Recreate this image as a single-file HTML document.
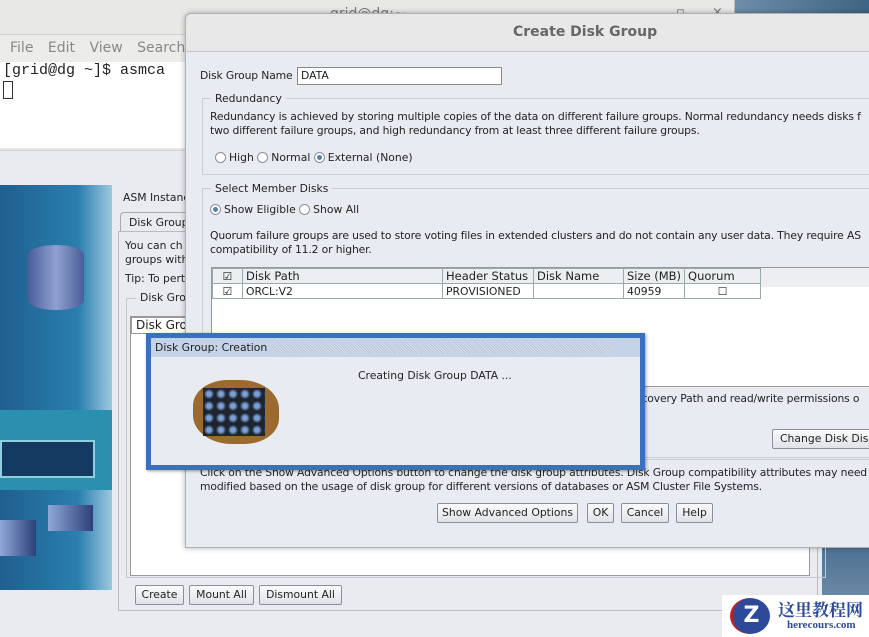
<!DOCTYPE html>
<html><head><meta charset="utf-8"><style>
*{margin:0;padding:0;box-sizing:border-box}
body{width:869px;height:637px;overflow:hidden;position:relative;background:#e9ebf0;font-family:"DejaVu Sans","Liberation Sans",sans-serif;font-size:10.8px;color:#222}
.a{position:absolute}
.btn{position:absolute;border:1px solid #8a8f99;border-radius:2px;background:linear-gradient(#fbfbfc,#dfe2e8);font-size:10.8px;text-align:center;line-height:18px;height:20px;color:#222}
.rad{display:inline-block;width:11px;height:11px;border:1px solid #8a8f99;border-radius:50%;background:#fff;vertical-align:-2px;margin-right:3px;position:relative}
.rad.on:after{content:"";position:absolute;left:2px;top:2px;width:5px;height:5px;border-radius:50%;background:#5a7fb5}
.grp{position:absolute;border:1px solid #c8ccd4;border-right:none}
.lg{position:absolute;background:#e8ebf2;padding:0 4px;top:-7px;left:8px}
td{border:1px solid #9aa;padding:0 3px;height:15px;font-size:10.8px;white-space:nowrap}
.t{letter-spacing:-0.15px}
</style></head><body>
<div class="a" style="left:735px;top:0;width:134px;height:20px;background:linear-gradient(90deg,#6e8da9,#3e6584)"></div>
<div class="a" style="left:0;top:0;width:735px;height:150px;background:#e8e8e7;border-right:1px solid #bbb"></div>
<div class="a" style="left:330px;top:6px;color:#777;font-size:14px">grid@dg:~</div>
<div class="a" style="left:676px;top:5px;color:#777;font-size:13px">▫</div>
<div class="a" style="left:712px;top:5px;color:#777;font-size:13px">×</div>
<div class="a" style="left:0;top:34px;width:735px;height:28px;border-top:1px solid #d4d4d4;background:#ececeb"></div>
<div class="a" style="left:10px;top:40px;font-size:14px;color:#888;word-spacing:10px">File Edit View Search</div>
<div class="a" style="left:0;top:62px;width:735px;height:86px;background:#fff"></div>
<div class="a" style="left:3px;top:62px;font-family:'Liberation Mono',monospace;font-size:15px;color:#222">[grid@dg ~]$ asmca</div>
<div class="a" style="left:3px;top:81px;width:10px;height:18px;border:1px solid #333"></div>
<div class="a" style="left:0;top:150px;width:822px;height:487px;background:#e9ebf0;border-top:1px solid #d0d0d0"></div>
<div class="a" style="left:822px;top:540px;width:47px;height:60px;background:linear-gradient(#4a6e90,#6d8aa6)"></div>
<div class="a" style="left:0;top:185px;width:112px;height:405px;background:linear-gradient(90deg,#1f5f8f 0%,#2a7fae 70%,#9dc8e0 100%)"></div>
<div class="a" style="left:0;top:410px;width:112px;height:80px;background:#2b8fb0"></div>
<div class="a" style="left:0;top:440px;width:95px;height:38px;background:#153a62;border:2px solid #8fd0e0"></div>
<div class="a" style="left:28px;top:245px;width:56px;height:65px;border-radius:28px/10px;background:linear-gradient(90deg,#4a5e9a,#8fa0d0,#4a5e9a)"></div>
<div class="a" style="left:0;top:520px;width:36px;height:36px;background:linear-gradient(90deg,#8fa8d8,#2c3f7a)"></div>
<div class="a" style="left:48px;top:505px;width:45px;height:26px;background:linear-gradient(90deg,#8fa8d8,#2c3f7a)"></div>
<div class="a" style="left:123px;top:191px">ASM Instanc</div>
<div class="a" style="left:120px;top:212px;width:80px;height:20px;border:1px solid #aaa;border-bottom:none;border-radius:4px 4px 0 0;padding:3px 8px">Disk Group</div>
<div class="a" style="left:118px;top:231px;width:700px;height:380px;border:1px solid #bbb"></div>
<div class="a" style="left:125px;top:239px;line-height:14px">You can ch<br>groups with</div>
<div class="a" style="left:125px;top:272px">Tip: To pert</div>
<div class="a" style="left:126px;top:298px;width:700px;height:280px;border:1px solid #c4c8d0"></div>
<div class="a" style="left:136px;top:291px;background:#e9ebf0;padding:0 4px">Disk Gro</div>
<div class="a" style="left:130px;top:316px;width:680px;height:260px;background:#fff;border:1px solid #999"></div>
<div class="a" style="left:131px;top:317px;width:68px;height:17px;border:1px solid #999;padding-left:4px;font-size:12px">Disk Gro</div>
<div class="btn" style="left:135px;top:585px;width:49px">Create</div>
<div class="btn" style="left:189px;top:585px;width:65px">Mount All</div>
<div class="btn" style="left:259px;top:585px;width:83px">Dismount All</div>
<div class="a" style="left:185px;top:13px;width:690px;height:535px;background:#e8ebf2;border:1px solid #b0b0b0;border-radius:6px 0 0 0;box-shadow:0 0 6px rgba(0,0,0,.3)"></div>
<div class="a" style="left:186px;top:14px;width:683px;height:38px;background:#e8e8e8;border-bottom:1px solid #c8c8c8;border-radius:6px 0 0 0"></div>
<div class="a" style="left:513px;top:24px;font-size:14px;font-weight:bold;color:#666">Create Disk Group</div>
<div class="a t" style="left:200px;top:69px">Disk Group Name</div>
<div class="a" style="left:297px;top:67px;width:205px;height:18px;background:#fff;border:1px solid #888;padding-left:3px;line-height:16px">DATA</div>
<div class="grp" style="left:202px;top:98px;width:680px;height:77px"><span class="lg">Redundancy</span></div>
<div class="a t" style="left:210px;top:110px;line-height:14px;white-space:nowrap">Redundancy is achieved by storing multiple copies of the data on different failure groups. Normal redundancy needs disks f<br>two different failure groups, and high redundancy from at least three different failure groups.</div>
<div class="a" style="left:215px;top:151px;white-space:nowrap"><span class="rad"></span>High <span class="rad"></span>Normal <span class="rad on"></span>External (None)</div>
<div class="grp" style="left:202px;top:188px;width:680px;height:270px"><span class="lg">Select Member Disks</span></div>
<div class="a" style="left:210px;top:203px;white-space:nowrap"><span class="rad on"></span>Show Eligible <span class="rad"></span>Show All</div>
<div class="a t" style="left:210px;top:229px;line-height:14px;white-space:nowrap">Quorum failure groups are used to store voting files in extended clusters and do not contain any user data. They require AS<br>compatibility of 11.2 or higher.</div>
<div class="a" style="left:211px;top:267px;width:660px;height:120px;background:#fff;border:1px solid #999"></div>
<div class="a" style="left:212px;top:268px;width:658px;height:19px;background:#eceef2"></div>
<table class="a" style="left:212px;top:268px;border-collapse:collapse;background:#fff">
<tr style="background:#eceef2"><td style="width:30px;text-align:center">☑</td><td style="width:200px;font-size:11.5px">Disk Path</td><td style="width:91px;font-size:11.5px">Header Status</td><td style="width:90px;font-size:11.5px">Disk Name</td><td style="width:60px;font-size:11.5px">Size (MB)</td><td style="width:76px;font-size:11.5px">Quorum</td></tr>
<tr><td style="text-align:center">☑</td><td>ORCL:V2</td><td>PROVISIONED</td><td></td><td>40959</td><td style="text-align:center">☐</td></tr>
</table>
<div class="a t" style="left:636px;top:392px;white-space:nowrap">scovery Path and read/write permissions o</div>
<div class="btn" style="left:772px;top:429px;width:110px;text-align:left;padding-left:7px">Change Disk Disc</div>
<div class="a" style="left:196px;top:459px;width:673px;border-top:1px solid #ccc"></div>
<div class="a t" style="left:200px;top:466px;line-height:14px;white-space:nowrap">Click on the Show Advanced Options button to change the disk group attributes. Disk Group compatibility attributes may need<br>modified based on the usage of disk group for different versions of databases or ASM Cluster File Systems.</div>
<div class="btn" style="left:437px;top:503px;width:141px">Show Advanced Options</div>
<div class="btn" style="left:587px;top:503px;width:27px">OK</div>
<div class="btn" style="left:621px;top:503px;width:48px">Cancel</div>
<div class="btn" style="left:676px;top:503px;width:37px">Help</div>
<div class="a" style="left:146px;top:333px;width:499px;height:137px;background:#e8ebf2;border:5px solid #3b6fbf;box-shadow:1px 1px 3px rgba(0,0,0,.4)"></div>
<div class="a" style="left:151px;top:338px;width:489px;height:19px;background:#c5d3e6"></div>
<div class="a" style="left:272px;top:341px;width:341px;height:12px;background:repeating-linear-gradient(45deg,#b9c6d8 0 1px,#d6dfeb 1px 2px)"></div>
<div class="a" style="left:155px;top:341px">Disk Group: Creation</div>
<div class="a" style="left:358px;top:369px">Creating Disk Group DATA ...</div>
<div class="a" style="left:193px;top:380px;width:86px;height:64px;border-radius:40% 45% 40% 45%;background:#9a6a2e"></div>
<div class="a" style="left:203px;top:388px;width:62px;height:48px;background:radial-gradient(circle,#7aa0d8 25%,#1e2530 60%);background-size:12px 12px"></div>
<div class="a" style="left:722px;top:595px;width:147px;height:42px;background:#fff"></div>
<div class="a" style="left:730px;top:598px;width:40px;height:36px;border-radius:50%;background:#2d4a9a;color:#fff;font-weight:bold;font-size:22px;text-align:center;line-height:36px;border-left:3px solid #c02020">Z</div>
<div class="a" style="left:778px;top:596px;font-family:'Noto Serif CJK SC',serif;font-weight:bold;font-size:17px;color:#2d4a9a">这里教程网</div>
<div class="a" style="left:787px;top:619px;font-family:'Liberation Serif',serif;font-weight:bold;font-size:11px;color:#2d4a9a">herecours.com</div>
</body></html>
